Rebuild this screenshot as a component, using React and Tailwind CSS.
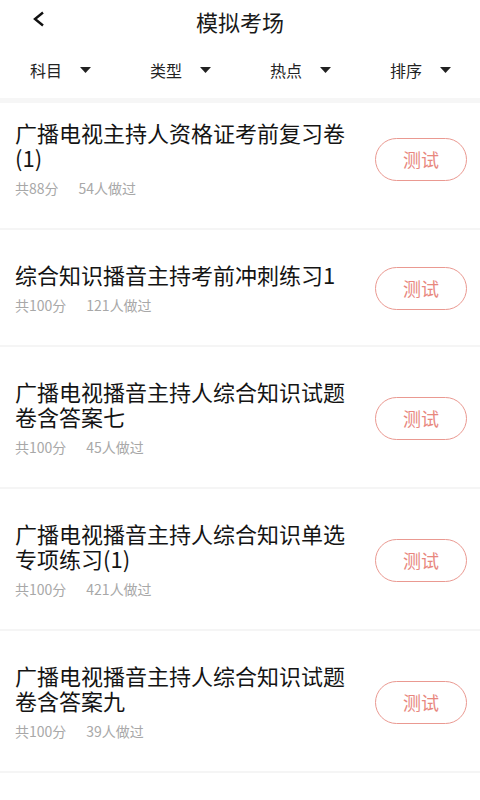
import React from 'react';

const papers = [
  { title: '广播电视主持人资格证考前复习卷(1)', score: 88, done: 54 },
  { title: '综合知识播音主持考前冲刺练习1', score: 100, done: 121 },
  { title: '广播电视播音主持人综合知识试题卷含答案七', score: 100, done: 45 },
  { title: '广播电视播音主持人综合知识单选专项练习(1)', score: 100, done: 421 },
  { title: '广播电视播音主持人综合知识试题卷含答案九', score: 100, done: 39 },
];

const filters = ['科目', '类型', '热点', '排序'];

function Caret() {
  return (
    <svg width="11" height="6" viewBox="0 0 11 6" className="shrink-0">
      <path d="M0 0 H11 L5.5 6 Z" fill="#222" />
    </svg>
  );
}

function PaperRow({ paper, first }) {
  return (
    <div className={`flex items-center bg-white pl-[15px] pr-[13px] pt-[32px] pb-[30px] ${first ? '-mt-[15px]' : ''}`}>
      <div className="flex-1 min-w-0 pr-[20px]">
        <p className="text-[22px] leading-[25px] text-[#141414] w-[340px]">{paper.title}</p>
        <div className="mt-[8px] flex gap-[20px] text-[14px] leading-[20px] text-[#a8a8a8]">
          <span>共{paper.score}分</span>
          <span>{paper.done}人做过</span>
        </div>
      </div>
      <button className="w-[92px] h-[43px] shrink-0 rounded-full border-[1.5px] border-[#ea9991] text-[18px] text-[#e8877e]">
        测试
      </button>
    </div>
  );
}

export default function App() {
  return (
    <div
      className="w-[480px] h-[800px] overflow-hidden bg-white flex flex-col"
      style={{ fontFamily: '"Noto Sans CJK SC", "Noto Sans", sans-serif' }}
    >
      {/* Title bar */}
      <div className="relative h-[42px] shrink-0 flex items-center justify-center">
        <button className="absolute left-[30px] top-[10px] w-[16px] h-[18px] flex items-center justify-center">
          <svg width="13" height="16" viewBox="0 0 13 16">
            <path d="M11 1.5 L3 8 L11 14.5" fill="none" stroke="#111" strokeWidth="2.4" />
          </svg>
        </button>
        <h1 className="text-[22px] leading-none text-[#1a1a1a]">模拟考场</h1>
      </div>

      {/* Filters */}
      <div className="h-[56px] shrink-0 grid grid-cols-4">
        {filters.map((f) => (
          <div key={f} className="flex items-center pl-[30px] gap-[18px]">
            <span className="text-[16px] text-[#222]">{f}</span>
            <Caret />
          </div>
        ))}
      </div>
      <div className="h-[5px] shrink-0 bg-[#f6f6f6]" />

      {/* List */}
      <div className="flex-1 overflow-hidden flex flex-col gap-[2px] bg-[#f5f5f5]">
        {papers.map((p, i) => (
          <PaperRow key={i} paper={p} first={i === 0} />
        ))}
        <div className="flex-1 bg-white" />
      </div>
    </div>
  );
}
